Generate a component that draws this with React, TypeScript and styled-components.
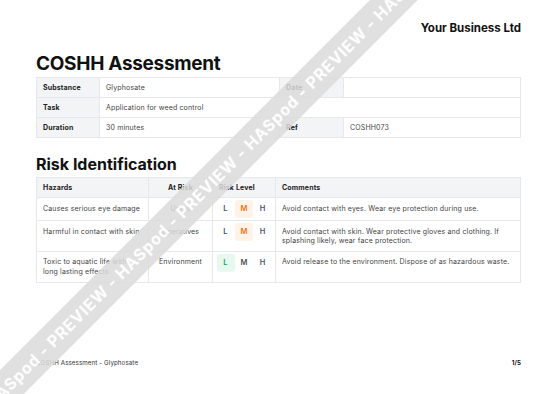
import React from 'react';
import styled, { createGlobalStyle } from 'styled-components';

const GlobalStyle = createGlobalStyle`
  html, body {
    margin: 0;
    padding: 0;
    background: #ffffff;
    overflow: hidden;
  }
  body {
    font-family: Inter, "Open Sans", Arial, sans-serif;
    color: #1f2328;
  }
`;

type Level = 'L' | 'M' | 'H';

const hazards: {
  hazard: string;
  atRisk: string;
  level: Level;
  comment: string;
}[] = [
  {
    hazard: 'Causes serious eye damage',
    atRisk: 'Users',
    level: 'M',
    comment: 'Avoid contact with eyes. Wear eye protection during use.',
  },
  {
    hazard: 'Harmful in contact with skin',
    atRisk: 'Operatives',
    level: 'M',
    comment:
      'Avoid contact with skin. Wear protective gloves and clothing. If splashing likely, wear face protection.',
  },
  {
    hazard: 'Toxic to aquatic life with long lasting effects',
    atRisk: 'Environment',
    level: 'L',
    comment: 'Avoid release to the environment. Dispose of as hazardous waste.',
  },
];

function App() {
  return (
    <Page>
      <GlobalStyle />
      <Company>Your Business Ltd</Company>
      <Title>COSHH Assessment</Title>

      <InfoTable>
        <colgroup>
          <col style={{ width: 63 }} />
          <col style={{ width: 180 }} />
          <col style={{ width: 64 }} />
          <col />
        </colgroup>
        <tbody>
          <tr>
            <Label>Substance</Label>
            <Value>Glyphosate</Value>
            <Label>Date</Label>
            <Value></Value>
          </tr>
          <tr>
            <Label>Task</Label>
            <Value colSpan={3}>Application for weed control</Value>
          </tr>
          <tr>
            <Label>Duration</Label>
            <Value>30 minutes</Value>
            <Label>Ref</Label>
            <Value>COSHH073</Value>
          </tr>
        </tbody>
      </InfoTable>

      <Section>Risk Identification</Section>

      <RiskTable>
        <colgroup>
          <col style={{ width: 112 }} />
          <col style={{ width: 64 }} />
          <col style={{ width: 63 }} />
          <col />
        </colgroup>
        <thead>
          <tr>
            <Head>Hazards</Head>
            <Head $center>At Risk</Head>
            <Head>Risk Level</Head>
            <Head>Comments</Head>
          </tr>
        </thead>
        <tbody>
          {hazards.map((h) => (
            <tr key={h.hazard}>
              <Cell>{h.hazard}</Cell>
              <Cell $center>{h.atRisk}</Cell>
              <LevelCell>
                <Levels>
                  {(['L', 'M', 'H'] as Level[]).map((l) => (
                    <Pill key={l} $level={l} $active={l === h.level}>
                      {l}
                    </Pill>
                  ))}
                </Levels>
              </LevelCell>
              <Cell>{h.comment}</Cell>
            </tr>
          ))}
        </tbody>
      </RiskTable>

      <Footer>
        <span>COSHH Assessment - Glyphosate</span>
        <PageNo>1/5</PageNo>
      </Footer>

      <Watermark>
        <Band>
          <BandHalf $side="left">
            HASpod - PREVIEW - HASpod - PREVIEW - HASpod - PREVIEW - HASpod - PREVIEW -
          </BandHalf>
          <BandHalf $side="right">
            &nbsp;HASpod - PREVIEW - HASpod - PREVIEW - HASpod - PREVIEW - HASpod
          </BandHalf>
        </Band>
      </Watermark>
    </Page>
  );
}

export default App;

const Page = styled.div`
  position: relative;
  box-sizing: border-box;
  width: 557px;
  height: 394px;
  padding: 21px 36px 27px;
  display: flex;
  flex-direction: column;
  overflow: hidden;
`;

const Company = styled.div`
  text-align: right;
  font-size: 11.5px;
  line-height: 14px;
  font-weight: 700;
  color: #111;
`;

const Title = styled.h1`
  margin: 17px 0 1px;
  font-size: 19px;
  line-height: 24px;
  letter-spacing: -0.3px;
  font-weight: 700;
  color: #111;
`;

const Section = styled.h2`
  margin: 16px 0 3px;
  font-size: 16px;
  line-height: 20px;
  font-weight: 700;
  color: #111;
`;

const InfoTable = styled.table`
  width: 100%;
  table-layout: fixed;
  border-collapse: collapse;
  font-size: 7px;
  letter-spacing: 0.15px;
`;

const Label = styled.td`
  height: 19px;
  padding: 0 6px;
  border: 1px solid #e6e8eb;
  background: #f3f4f6;
  font-weight: 700;
  color: #222;
  vertical-align: middle;
`;

const Value = styled.td`
  height: 19px;
  padding: 0 6px;
  border: 1px solid #e6e8eb;
  background: #fff;
  color: #444;
  vertical-align: middle;
`;

const RiskTable = styled.table`
  width: 100%;
  table-layout: fixed;
  border-collapse: collapse;
  font-size: 7px;
  line-height: 9.7px;
  letter-spacing: 0.15px;
`;

const Head = styled.th<{ $center?: boolean }>`
  height: 19px;
  padding: 0 6px;
  border: 1px solid #e6e8eb;
  background: #f3f4f6;
  font-weight: 700;
  color: #222;
  text-align: ${(p) => (p.$center ? 'center' : 'left')};
  vertical-align: middle;
`;

const Cell = styled.td<{ $center?: boolean }>`
  padding: 5.5px 6px 5px;
  border: 1px solid #e6e8eb;
  color: #444;
  text-align: ${(p) => (p.$center ? 'center' : 'left')};
  vertical-align: top;
`;

const LevelCell = styled.td`
  padding: 2px 0;
  border: 1px solid #e6e8eb;
  vertical-align: top;
`;

const Levels = styled.div`
  display: flex;
  justify-content: center;
  gap: 0.5px;
`;

const pillColors: Record<Level, { fg: string; bg: string }> = {
  L: { fg: '#1f9d62', bg: '#e7f8ee' },
  M: { fg: '#f2711c', bg: '#fff3e8' },
  H: { fg: '#d92d20', bg: '#fdecec' },
};

const Pill = styled.span<{ $level: Level; $active: boolean }>`
  width: 18px;
  height: 18px;
  border-radius: 3px;
  display: flex;
  align-items: center;
  justify-content: center;
  font-size: 7.5px;
  font-weight: 600;
  color: ${(p) => (p.$active ? pillColors[p.$level].fg : '#4b5563')};
  background: ${(p) => (p.$active ? pillColors[p.$level].bg : 'transparent')};
`;

const Footer = styled.div`
  margin-top: auto;
  display: flex;
  justify-content: space-between;
  align-items: center;
  font-size: 6.2px;
  line-height: 8px;
  letter-spacing: 0.1px;
  color: #333;
`;

const PageNo = styled.span`
  font-weight: 700;
  color: #111;
`;

const Watermark = styled.div`
  position: absolute;
  left: 244px;
  top: 150px;
  width: 0;
  height: 0;
  pointer-events: none;
`;

const Band = styled.div`
  position: absolute;
  left: -450px;
  top: -17px;
  width: 900px;
  height: 34px;
  transform: rotate(-45deg);
  display: flex;
  align-items: center;
  background: rgba(218, 218, 218, 0.85);
  backdrop-filter: blur(2.5px);
  color: #fff;
  font-family: Inter, Arial, sans-serif;
  font-size: 16px;
  font-weight: 700;
  letter-spacing: 0.8px;
  white-space: pre;
  overflow: hidden;
`;

const BandHalf = styled.div<{ $side: 'left' | 'right' }>`
  flex: 0 0 50%;
  display: flex;
  overflow: hidden;
  justify-content: ${(p) => (p.$side === 'left' ? 'flex-end' : 'flex-start')};
`;
